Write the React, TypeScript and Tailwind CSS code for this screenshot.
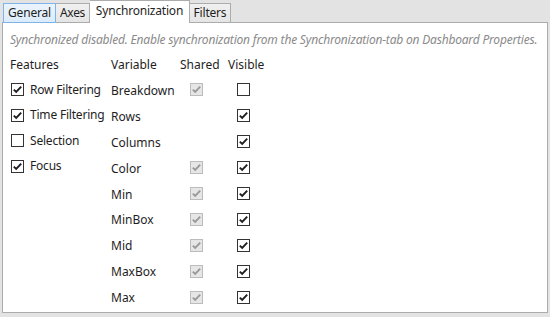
const FEATURES = [
  { label: 'Row Filtering', checked: true },
  { label: 'Time Filtering', checked: true },
  { label: 'Selection', checked: false },
  { label: 'Focus', checked: true },
];

const VARIABLES: { name: string; shared: boolean | null; visible: boolean }[] = [
  { name: 'Breakdown', shared: true, visible: false },
  { name: 'Rows', shared: null, visible: true },
  { name: 'Columns', shared: null, visible: true },
  { name: 'Color', shared: true, visible: true },
  { name: 'Min', shared: true, visible: true },
  { name: 'MinBox', shared: true, visible: true },
  { name: 'Mid', shared: true, visible: true },
  { name: 'MaxBox', shared: true, visible: true },
  { name: 'Max', shared: true, visible: true },
];

function Checkbox({ checked, disabled }: { checked: boolean; disabled?: boolean }) {
  return (
    <span
      className={
        disabled
          ? 'flex h-[13px] w-[13px] shrink-0 items-center justify-center border border-[#bcbcbc] bg-[#e6e6e6]'
          : 'flex h-[13px] w-[13px] shrink-0 items-center justify-center border border-[#333333] bg-white'
      }
    >
      {checked && (
        <svg width="11" height="11" viewBox="0 0 11 11">
          <path
            d="M1.8 5.6 L4.2 8 L9.2 2.6"
            fill="none"
            stroke={disabled ? '#9a9a9a' : '#1e1e1e'}
            strokeWidth="1.9"
          />
        </svg>
      )}
    </span>
  );
}

export default function App() {
  return (
    <div
      className="flex h-[317px] w-[550px] flex-col bg-[#e3e3e3] px-[2px] pb-[4px] text-[12px] text-[#1e1e1e]"
      style={{ fontFamily: '"Segoe UI", "Noto Sans", sans-serif' }}
    >
      {/* tab strip */}
      <div className="relative z-10 -mb-px flex h-[23px] items-end pl-px">
        <div className="flex h-[20px] w-[53px] items-center justify-center border border-[#7eb4ea] bg-gradient-to-b from-[#ecf4fc] to-[#dcecfc] tracking-[-0.2px]">
          General
        </div>
        <div className="flex h-[20px] w-[34px] items-center justify-center border border-l-0 border-[#acacac] bg-gradient-to-b from-[#f0f0f0] to-[#e5e5e5] tracking-[-0.3px]">
          Axes
        </div>
        <div className="flex h-[23px] w-[100px] items-center justify-center border border-b-0 border-l-0 border-[#acacac] bg-white pb-[2px] tracking-[-0.2px]">
          Synchronization
        </div>
        <div className="flex h-[20px] w-[41px] items-center justify-center border border-l-0 border-[#acacac] bg-gradient-to-b from-[#f0f0f0] to-[#e5e5e5] tracking-[-0.2px]">
          Filters
        </div>
      </div>
      <div className="flex flex-1 flex-col border border-[#acacac] bg-white pl-[7px]">
        <p className="mt-[8px] h-[17px] whitespace-nowrap italic tracking-[-0.19px] text-[#8a8a8a]">
          Synchronized disabled. Enable synchronization from the Synchronization-tab on Dashboard Properties.
        </p>
        <div className="mt-[4px] flex">
          <div className="flex w-[101px] flex-col">
            <div className="flex h-[25px] items-center">Features</div>
            {FEATURES.map((f) => (
              <div key={f.label} className="flex h-[25.5px] items-center gap-[6px] pl-px">
                <Checkbox checked={f.checked} />
                <span className="whitespace-nowrap tracking-[-0.2px]">{f.label}</span>
              </div>
            ))}
          </div>
          <div className="flex flex-col">
            <div className="flex h-[25px] items-center">
              <span className="w-[69px]">Variable</span>
              <span className="w-[48px]">Shared</span>
              <span>Visible</span>
            </div>
            {VARIABLES.map((v) => (
              <div key={v.name} className="flex h-[25.9px] items-center">
                <span className="w-[69px] pt-[2px]">{v.name}</span>
                <span className="w-[57px] pl-[10px]">
                  {v.shared !== null && <Checkbox checked={v.shared} disabled />}
                </span>
                <Checkbox checked={v.visible} />
              </div>
            ))}
          </div>
        </div>
      </div>
    </div>
  );
}
